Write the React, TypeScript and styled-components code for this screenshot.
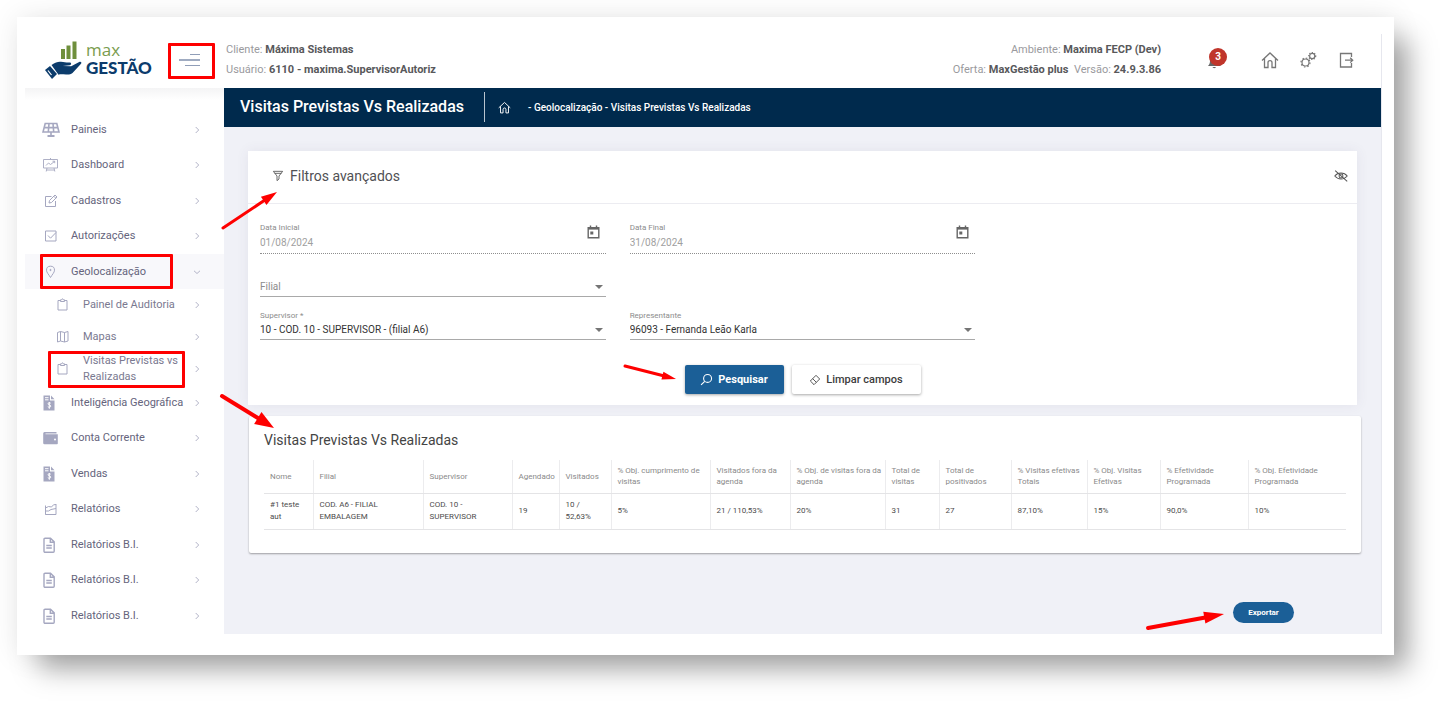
import React from 'react';
import styled, { createGlobalStyle, css } from 'styled-components';

const Global = createGlobalStyle`
  *, *::before, *::after { box-sizing: border-box; }
  body { margin: 0; background: #fff; font-family: Roboto, sans-serif; font-size: 11px; color: #575962; }
  ul { list-style: none; margin: 0; padding: 0; }
  button, input, select { font-family: inherit; }
  svg { display: block; flex: none; }
`;

const RED = '#fe0000';

/* ---------- frame ---------- */

const Page = styled.div`
  padding: 17px 48px 48px 17px;
  overflow: hidden;
`;

const Frame = styled.div`
  background: #fff;
  padding: 17px 12px 21px 8px;
  box-shadow: 18px 18px 26px -4px rgba(0, 0, 0, 0.34), 0 0 28px rgba(0, 0, 0, 0.09);
`;

const Shell = styled.div`
  border-right: 1px solid #e6e7ee;
`;

const Body = styled.div`
  display: grid;
  grid-template-columns: 199px minmax(0, 1fr);
`;

/* ---------- annotations ---------- */

const Highlight = styled.span<{ $inset: string }>`
  position: absolute;
  inset: ${p => p.$inset};
  border: 3px solid ${RED};
  border-radius: 1px;
  pointer-events: none;
`;

const ArrowSvg = styled.svg<{ $left: string; $top: string }>`
  position: absolute;
  left: ${p => p.$left};
  top: ${p => p.$top};
  overflow: visible;
  pointer-events: none;
  z-index: 2;
`;

type ArrowProps = {
  from: [number, number];
  to: [number, number];
  head: number;
  spread: number;
  weight: number;
  $left: string;
  $top: string;
};

function Arrow({ from, to, head, spread, weight, ...place }: ArrowProps) {
  const dx = to[0] - from[0];
  const dy = to[1] - from[1];
  const len = Math.hypot(dx, dy);
  const ux = dx / len;
  const uy = dy / len;
  const bx = to[0] - ux * head;
  const by = to[1] - uy * head;
  return (
    <ArrowSvg width={Math.max(from[0], to[0])} height={Math.max(from[1], to[1])} aria-hidden="true" {...place}>
      <line x1={from[0]} y1={from[1]} x2={bx + ux} y2={by + uy} stroke={RED} strokeWidth={weight} strokeLinecap="round" />
      <polygon
        fill={RED}
        points={`${to[0]},${to[1]} ${bx - uy * spread},${by + ux * spread} ${bx + uy * spread},${by - ux * spread}`}
      />
    </ArrowSvg>
  );
}

/* ---------- icons ---------- */

const Line = styled.svg.attrs({ viewBox: '0 0 18 18', 'aria-hidden': true })<{ $size?: number; $weight?: number }>`
  width: ${p => p.$size ?? 18}px;
  height: ${p => p.$size ?? 18}px;
  fill: none;
  stroke: currentColor;
  stroke-width: ${p => p.$weight ?? 1};
`;

const icons = {
  solar: (
    <Line $weight={1.6}>
      <path d="M3.2 2.500h11.600l2.200 8.500h-16zM2 6.600h14M7 2.500L6.300 11M11 2.500l.7 8.500M9 11v3.500" />
      <path d="M5.500 15h7" strokeWidth="2" />
    </Line>
  ),
  board: (
    <Line $weight={0.9}>
      <path d="M1.500 3.500h14v8.500h-14zM8.500 2v1.500M5 12l-.8 3.500M12 12l.8 3.500M4.500 14h8" />
      <path d="M4 9.500l2.500-2.500 2 1.500L12.500 5.500M10.500 5.200h2.200v2" />
    </Line>
  ),
  pencil: (
    <Line>
      <path d="M9.500 4.500h-6v10h10V9" />
      <path d="M7 11l.5-2.500L13 3l2 2-5.500 5.500zM11.800 4.200l2 2" />
    </Line>
  ),
  check: (
    <Line>
      <path d="M3.500 4h10.500v10H3.500zM6 8.500l2.500 2.700L14 5.500" />
    </Line>
  ),
  pin: (
    <Line>
      <path d="M8.500 14.500C6.800 11.500 4.500 9.500 4.500 7.200a4 4 0 0 1 8 0c0 2.300-2.300 4.300-4 7.300z" />
      <circle cx="8.500" cy="7" r=".6" fill="currentColor" />
    </Line>
  ),
  clip: (
    <Line>
      <path d="M6.500 4.500h-2.500v9.500h9v-9.500h-2.500M6.500 5.500V3.800h1.200c0-1.300 1.600-1.300 1.600 0h1.200v1.700z" />
    </Line>
  ),
  map: (
    <Line>
      <path d="M3.500 4.500l3-1 4 1 3.500-1v9.500l-3.500 1-4-1-3 1zM6.500 3.500v9.500M10.500 4.500v9.500" />
    </Line>
  ),
  money: (
    <Line>
      <path d="M1.500 1.500h6.500v5h4.500v10h-11zM9 1.500l3.500 3.700H9z" fill="currentColor" stroke="none" />
      <path d="M3 3.700h3.500M3 5.800h3.500" stroke="#fff" />
      <path d="M8.700 9.200c-1-.8-3-.4-2.700.8.200 1.200 2.700.7 2.800 2 .1 1.300-2 1.600-3 .7M7.300 8v6.800" stroke="#fff" />
    </Line>
  ),
  wallet: (
    <Line>
      <path d="M3 3h11.500v1.500H3.500v.8h12.300v9.200a.8.800 0 0 1-.8.800H2.500a1.300 1.300 0 0 1-1.300-1.300V4.500A1.500 1.500 0 0 1 3 3z" fill="currentColor" stroke="none" />
      <circle cx="13" cy="10.500" r="1" fill="#fff" stroke="none" />
    </Line>
  ),
  area: (
    <Line>
      <path d="M3.500 5.500v9h10.500V4M3.500 8l3-1.500 3 .5 2-2.200 2.500-.3M3.500 11h3l2.500-1.500 5-1M3.500 14.500H14" />
    </Line>
  ),
  doc: (
    <Line $weight={1.4}>
      <path d="M3 2.200h5.500l3.700 3.700v9.300a1 1 0 0 1-1 1H3a1 1 0 0 1-1-1v-12a1 1 0 0 1 1-1zM8.300 2.500v3.700h3.700M4.300 9.500h5.500M4.300 12h5.500" />
    </Line>
  ),
};

const Chevron = ({ down }: { down?: boolean }) => (
  <svg width="8" height="8" viewBox="0 0 8 8" fill="none" stroke="#b3b4c8" strokeWidth="1" aria-hidden="true">
    <path d={down ? 'M1 2.800l3 2.700 3-2.700' : 'M2.700 1l3 3-3 3'} />
  </svg>
);

const House = ({ size }: { size: number }) => (
  <Line $size={size} $weight={1.3}>
    <path d="M1 9.500L9 2l8 7.500M3.500 7.500v9H7v-5c0-2.500 4-2.500 4 0v5h3.500v-9" />
  </Line>
);

/* ---------- header ---------- */

const Header = styled.header`
  display: flex;
  align-items: center;
  height: 54px;
  padding-left: 20px;
`;

const Brand = styled.a`
  display: flex;
  width: 110px;
  height: 44px;
  color: #0c3c6c;
  text-decoration: none;
`;

const BrandText = styled.span`
  display: flex;
  flex-direction: column;
  justify-content: center;
  margin-left: 3px;
  padding-bottom: 4px;
  line-height: 18px;
  font-family: Lato, sans-serif;
  font-size: 17px;
  font-weight: 900;
`;

const BrandTop = styled.span`
  font-family: 'Open Sans', sans-serif;
  font-weight: 400;
  color: #7a9c4e;
`;

const MenuButton = styled.button`
  position: relative;
  display: grid;
  place-items: center;
  width: 47px;
  height: 36px;
  margin-left: 13px;
  padding: 0 4px 2px 0;
  border: 0;
  background: none;
  color: #6b7da0;
`;

const Meta = styled.div<{ $end?: boolean }>`
  color: #9a9a9e;
  line-height: 20px;
  margin: 0 0 2px 11px;
  white-space: pre;
  ${p => p.$end && css`
    margin-left: auto;
    text-align: right;
  `}
  strong { color: #58585b; font-weight: 700; }
`;

const HeaderActions = styled.nav`
  display: flex;
  align-items: center;
  gap: 20px;
  margin-left: 44px;
  padding: 0 26px 2px 0;
  color: #777;
`;

const IconButton = styled.button`
  position: relative;
  display: grid;
  place-items: center;
  padding: 0;
  border: 0;
  background: none;
  color: inherit;
`;

const BellButton = styled(IconButton)`
  width: 24px;
  height: 24px;
  margin-right: 12px;
`;

const Count = styled.span`
  position: absolute;
  left: 4px;
  top: 0;
  width: 18px;
  border-radius: 9px;
  background: #c0352b;
  color: #fff;
  font-size: 10px;
  font-weight: 700;
  line-height: 18px;
`;

/* ---------- sidebar ---------- */

const Sidebar = styled.nav`
  display: flex;
  flex-direction: column;
  padding-top: 24px;
  background: linear-gradient(#f4f4f5, #fff 12px);
`;

const MenuList = styled.ul`
  display: flex;
  flex-direction: column;
  flex: 1;
`;

const MenuEntry = styled.li`
  display: flex;
  flex: 1 0 35px;
`;

const SubEntry = styled.li`
  display: flex;
  flex: 0 0 32px;
`;

const MenuLink = styled.a<{ $active?: boolean; $sub?: boolean }>`
  position: relative;
  display: grid;
  grid-template-columns: 29px minmax(0, 1fr) 8px;
  align-items: center;
  width: 100%;
  padding: 0 23px 0 ${p => (p.$sub ? 29 : 17)}px;
  background: ${p => (p.$active ? '#f8f8fb' : 'none')};
  color: ${p => (p.$sub ? '#7a7990' : '#65647c')};
  font-size: 11px;
  line-height: 16px;
  text-decoration: none;
  > svg:first-child { color: #a5a7c0; }
  > span:nth-child(2) { padding-right: 9px; }
`;

type Item = { label: string; icon: keyof typeof icons; open?: boolean };

const itemsTop: Item[] = [
  { label: 'Paineis', icon: 'solar' },
  { label: 'Dashboard', icon: 'board' },
  { label: 'Cadastros', icon: 'pencil' },
  { label: 'Autorizações', icon: 'check' },
  { label: 'Geolocalização', icon: 'pin', open: true },
];

const itemsSub: Item[] = [
  { label: 'Painel de Auditoria', icon: 'clip' },
  { label: 'Mapas', icon: 'map' },
  { label: 'Visitas Previstas vs Realizadas', icon: 'clip', open: true },
];

const itemsBottom: Item[] = [
  { label: 'Inteligência Geográfica', icon: 'money' },
  { label: 'Conta Corrente', icon: 'wallet' },
  { label: 'Vendas', icon: 'money' },
  { label: 'Relatórios', icon: 'area' },
  { label: 'Relatórios B.I.', icon: 'doc' },
  { label: 'Relatórios B.I.', icon: 'doc' },
  { label: 'Relatórios B.I.', icon: 'doc' },
];

const MainItem = ({ item }: { item: Item }) => (
  <MenuEntry>
    <MenuLink href="#" $active={item.open}>
      {icons[item.icon]}
      <span>{item.label}</span>
      <Chevron down={item.open} />
      {item.open && <Highlight $inset="0 51px 0 15px" />}
    </MenuLink>
  </MenuEntry>
);

/* ---------- content ---------- */

const Main = styled.main`
  background: #f0f1f7;
`;

const TitleBar = styled.div`
  display: flex;
  align-items: center;
  height: 39px;
  padding: 0 0 1px 16px;
  background: #002a4d;
  color: #fff;
`;

const PageTitle = styled.h1`
  margin: 0;
  padding-right: 20px;
  border-right: 1px solid #b8c4cf;
  font-size: 16px;
  font-weight: 500;
  line-height: 30px;
`;

const Crumbs = styled.div`
  display: flex;
  align-items: center;
  gap: 17px;
  padding-left: 13px;
  font-size: 10px;
  font-weight: 500;
`;

const Content = styled.div`
  padding: 24px 0 11px;
`;

const FilterCard = styled.section`
  position: relative;
  margin: 0 24px;
  padding-bottom: 11px;
  background: #fff;
  box-shadow: 0 0 12px rgba(82, 63, 105, 0.08);
`;

const FilterHead = styled.div`
  display: flex;
  align-items: center;
  height: 53px;
  padding: 0 9px 2px 24px;
  border-bottom: 1px solid #ececf1;
  color: #555;
`;

const FilterTitle = styled.h2`
  flex: 1;
  margin: 0 0 0 6px;
  font-size: 14px;
  font-weight: 400;
  color: #505054;
`;

const Fields = styled.form`
  display: grid;
  grid-template-columns: repeat(3, minmax(0, 1fr));
  column-gap: 24px;
  padding: 17px 12px 0;
`;

const FieldBox = styled.div<{ $first?: boolean; $dotted?: boolean }>`
  position: relative;
  grid-column-start: ${p => (p.$first ? 1 : 'auto')};
  display: flex;
  flex-direction: column;
  justify-content: flex-end;
  gap: ${p => (p.$dotted ? 1 : 0)}px;
  height: ${p => (p.$dotted ? 33 : 43)}px;
  padding-bottom: ${p => (p.$dotted ? 2 : 1)}px;
  border-bottom: ${p => (p.$dotted ? '1px dotted #8e8e8e' : '1px solid #a9a9a9')};
`;

const FieldLabel = styled.label`
  font-size: 8px;
  line-height: 12px;
  color: #8c8c8c;
`;

const textLook = css`
  width: 100%;
  height: 16px;
  padding: 0;
  border: 0;
  background: none;
  font-size: 10px;
  line-height: 16px;
`;

const DateInput = styled.input`
  ${textLook}
  color: #a0a0a0;
`;

const Picker = styled.select<{ $empty?: boolean }>`
  ${textLook}
  appearance: none;
  color: ${p => (p.$empty ? '#8c8c8c' : '#333')};
`;

const Caret = styled.span`
  position: absolute;
  right: 3px;
  bottom: 7px;
  border: 4px solid transparent;
  border-bottom: 0;
  border-top-color: #757575;
  pointer-events: none;
`;

const CalendarButton = styled(IconButton)`
  position: absolute;
  right: 6px;
  bottom: 14px;
  color: #666;
`;

const Actions = styled.div`
  position: relative;
  display: flex;
  justify-content: center;
  gap: 8px;
  width: fit-content;
  margin: 25px auto 0;
`;

const Action = styled.button<{ $primary?: boolean }>`
  display: flex;
  align-items: center;
  justify-content: center;
  gap: 5px;
  width: ${p => (p.$primary ? 99 : 129)}px;
  height: 29px;
  padding: 0;
  border: 0;
  border-radius: 2px;
  background: ${p => (p.$primary ? '#1b5f97' : '#fff')};
  color: ${p => (p.$primary ? '#fff' : '#3c3c3c')};
  box-shadow: 0 1px 3px rgba(0, 0, 0, 0.35);
  font-size: 11px;
  font-weight: ${p => (p.$primary ? 700 : 500)};
`;

const ResultCard = styled.section`
  position: relative;
  margin: 11px 20px 0 25px;
  padding: 14px 15px 23px;
  border-radius: 2px;
  background: #fff;
  box-shadow: 0 1px 2px rgba(0, 0, 0, 0.35);
`;

const ResultTitle = styled.h2`
  margin: 0 0 10px;
  font-size: 14px;
  font-weight: 400;
  line-height: 20px;
  color: #444;
`;

const Table = styled.table`
  width: 100%;
  table-layout: fixed;
  border-collapse: collapse;
  font-size: 8px;
  th, td {
    padding: 0 0 0 6px;
    border-bottom: 1px solid #e4e4e6;
    text-align: left;
  }
  th + th, td + td { border-left: 1px solid #ececee; }
  th {
    height: 33px;
    line-height: 11px;
    font-weight: 400;
    color: #8a8a8a;
  }
  td {
    height: 36px;
    line-height: 12px;
    color: #4c4c4c;
  }
`;

const columns: { head: string; value: string; width?: number }[] = [
  { head: 'Nome', value: '#1 teste\naut', width: 49 },
  { head: 'Filial', value: 'COD. A6 - FILIAL\nEMBALAGEM', width: 110 },
  { head: 'Supervisor', value: 'COD. 10 -\nSUPERVISOR', width: 89 },
  { head: 'Agendado', value: '19', width: 47 },
  { head: 'Visitados', value: '10 /\n52,63%', width: 52 },
  { head: '% Obj. cumprimento de\nvisitas', value: '5%', width: 99 },
  { head: 'Visitados fora da\nagenda', value: '21 / 110,53%', width: 80 },
  { head: '% Obj. de visitas fora da\nagenda', value: '20%', width: 95 },
  { head: 'Total de\nvisitas', value: '31', width: 54 },
  { head: 'Total de\npositivados', value: '27', width: 72 },
  { head: '% Visitas efetivas\nTotais', value: '87,10%', width: 76 },
  { head: '% Obj. Visitas\nEfetivas', value: '15%', width: 73 },
  { head: '% Efetividade\nProgramada', value: '90,0%', width: 88 },
  { head: '% Obj. Efetividade\nProgramada', value: '10%' },
];

const Cell = styled.span`
  display: block;
  white-space: pre;
`;

const Footer = styled.div`
  position: relative;
  display: flex;
  justify-content: flex-end;
  width: fit-content;
  margin: 49px 87px 0 auto;
`;

const ExportButton = styled.button`
  width: 61px;
  height: 21px;
  padding: 0;
  border: 0;
  border-radius: 11px;
  background: #1b5f97;
  color: #fff;
  font-size: 8px;
  font-weight: 700;
`;

const Calendar = () => (
  <svg width="13" height="14" viewBox="0 0 13 14" fill="none" stroke="currentColor" strokeWidth="1.400" aria-hidden="true">
    <path d="M1.200 2.700h10.600v10H1.200zM3.500 .5v2M9.500 .5v2" />
    <path d="M1.200 3.500h10.600" strokeWidth="2.200" />
    <path d="M3.300 6.500h3v3h-3z" fill="currentColor" stroke="none" />
  </svg>
);

export default function App() {
  return (
    <Page>
      <Global />
      <Frame>
        <Shell>
          <Header>
            <Brand href="#" aria-label="max GESTÃO">
              <svg width="38" height="44" viewBox="0 0 38 44" aria-hidden="true">
                <path d="M16 10h4v10h-4zM21.500 6.500h4V20h-4zM27.500 2.500h4V20h-4z" fill="#6f8f3c" />
                <path d="M0 31l5-4 7 8-5 5z" fill="#0c3c6c" />
                <path d="M3 31.500l3.500 4.500" stroke="#fff" strokeWidth="1.200" />
                <path d="M6.500 26c4-3 7-3.500 9.500-3.200 3.500.4 5 .8 8.500.7 2 0 2.300 2.300.2 2.700l-7 .8 8.500.3 8-4.200c1.800-.8 3 .6 1.600 2L27.500 34c-2 1.600-4 1.700-6.500 1.500-3.500-.3-5.500-.7-7.500.2z" fill="#0c3c6c" />
              </svg>
              <BrandText>
                <BrandTop>max</BrandTop>
                <span>GESTÃO</span>
              </BrandText>
            </Brand>
            <MenuButton type="button" aria-label="Abrir menu">
              <svg width="22" height="14" viewBox="0 0 22 14" fill="none" stroke="currentColor" aria-hidden="true">
                <path d="M11 1.500h10M6 12.500h15" opacity=".75" />
                <path d="M0 7h21" strokeWidth="1.300" />
              </svg>
              <Highlight $inset="0" />
            </MenuButton>
            <Meta>
              <div>Cliente: <strong>Máxima Sistemas</strong></div>
              <div>Usuário: <strong>6110 - maxima.SupervisorAutoriz</strong></div>
            </Meta>
            <Meta $end>
              <div>Ambiente: <strong>Maxima FECP (Dev)</strong></div>
              <div>Oferta: <strong>MaxGestão plus</strong>{'  '}Versão: <strong>24.9.3.86</strong></div>
            </Meta>
            <HeaderActions aria-label="Ações">
              <BellButton type="button" aria-label="Notificações">
                <svg width="18" height="18" viewBox="0 0 18 18" fill="#666" aria-hidden="true">
                  <path d="M0 15c2-2 2-4 2-6a4.500 4.500 0 0 1 9 0c0 2 0 4 2 6zM4.500 16H8c-.5 1.500-3 1.500-3.500 0z" />
                </svg>
                <Count>3</Count>
              </BellButton>
              <IconButton type="button" aria-label="Início"><House size={18} /></IconButton>
              <IconButton type="button" aria-label="Configurações">
                <Line $weight={1.2}>
                  <circle cx="6.500" cy="11.500" r="3.500" />
                  <circle cx="6.500" cy="11.500" r="4.500" strokeDasharray="1.500 2" />
                  <circle cx="13.200" cy="5" r="2.600" />
                  <circle cx="13.200" cy="5" r="3.500" strokeDasharray="1.200 1.400" />
                </Line>
              </IconButton>
              <IconButton type="button" aria-label="Sair">
                <Line $weight={1.3}>
                  <path d="M14.500 6V2.500h-11v13.500h11V12M8 9.200h7.500M13.200 6.800l2.500 2.400-2.500 2.400" />
                </Line>
              </IconButton>
            </HeaderActions>
          </Header>

          <Body>
            <Sidebar aria-label="Menu principal">
              <MenuList>
                {itemsTop.map(item => <MainItem key={item.label} item={item} />)}
                {itemsSub.map(item => (
                  <SubEntry key={item.label}>
                    <MenuLink href="#" $sub>
                      {icons[item.icon]}
                      <span>{item.label}</span>
                      <Chevron />
                      {item.open && <Highlight $inset="-2px 39px -3px 23px" />}
                    </MenuLink>
                  </SubEntry>
                ))}
                {itemsBottom.map((item, i) => <MainItem key={i} item={item} />)}
              </MenuList>
            </Sidebar>

            <Main>
              <TitleBar>
                <PageTitle>Visitas Previstas Vs Realizadas</PageTitle>
                <Crumbs>
                  <House size={13} />
                  <span>- Geolocalização - Visitas Previstas Vs Realizadas</span>
                </Crumbs>
              </TitleBar>

              <Content>
                <FilterCard>
                  <Arrow $left="-26px" $top="40px" from={[1, 37]} to={[55, 1]} head={16} spread={5} weight={3} />
                  <FilterHead>
                    <Line $size={12} $weight={1.3}>
                      <path d="M2 2h14l-5.500 7v4.500L7.500 16V9zM4 5h10" />
                    </Line>
                    <FilterTitle>Filtros avançados</FilterTitle>
                    <IconButton type="button" aria-label="Ocultar filtros">
                      <Line $size={14} $weight={1.3}>
                        <path d="M1 9C5 4 13 4 17 9 13 14 5 14 1 9zM1.500 2L17 16" />
                        <circle cx="9" cy="9" r="2.500" />
                      </Line>
                    </IconButton>
                  </FilterHead>

                  <Fields>
                    <FieldBox $first $dotted>
                      <FieldLabel htmlFor="data-inicial">Data Inicial</FieldLabel>
                      <DateInput id="data-inicial" defaultValue="01/08/2024" disabled />
                      <CalendarButton type="button" aria-label="Escolher data inicial"><Calendar /></CalendarButton>
                    </FieldBox>
                    <FieldBox $dotted>
                      <FieldLabel htmlFor="data-final">Data Final</FieldLabel>
                      <DateInput id="data-final" defaultValue="31/08/2024" disabled />
                      <CalendarButton type="button" aria-label="Escolher data final"><Calendar /></CalendarButton>
                    </FieldBox>
                    <FieldBox $first>
                      <Picker aria-label="Filial" $empty defaultValue="">
                        <option value="">Filial</option>
                      </Picker>
                      <Caret />
                    </FieldBox>
                    <FieldBox $first>
                      <FieldLabel htmlFor="supervisor">Supervisor *</FieldLabel>
                      <Picker id="supervisor">
                        <option>10 - COD. 10 - SUPERVISOR - (filial A6)</option>
                      </Picker>
                      <Caret />
                    </FieldBox>
                    <FieldBox>
                      <FieldLabel htmlFor="representante">Representante</FieldLabel>
                      <Picker id="representante">
                        <option>96093 - Fernanda Leão Karla</option>
                      </Picker>
                      <Caret />
                    </FieldBox>
                  </Fields>

                  <Actions>
                    <Arrow $left="-62px" $top="-1px" from={[2, 2]} to={[53, 15]} head={14} spread={4} weight={3} />
                    <Action type="button" $primary>
                      <Line $size={13} $weight={1.5}>
                        <circle cx="10.500" cy="7.500" r="5.500" />
                        <path d="M6.500 11.500L1.500 16.500" />
                      </Line>
                      Pesquisar
                    </Action>
                    <Action type="button">
                      <Line $size={12} $weight={1.3}>
                        <path d="M2 10.500L10.500 2 16 7.500 7.500 16zM5.500 7l5.500 5.500" />
                      </Line>
                      Limpar campos
                    </Action>
                  </Actions>
                </FilterCard>

                <ResultCard>
                  <Arrow $left="-29px" $top="-22px" from={[2, 2]} to={[54, 34]} head={19} spread={7} weight={4} />
                  <ResultTitle>Visitas Previstas Vs Realizadas</ResultTitle>
                  <Table>
                    <colgroup>
                      {columns.map(c => <col key={c.head} width={c.width} />)}
                    </colgroup>
                    <thead>
                      <tr>{columns.map(c => <th key={c.head} scope="col"><Cell>{c.head}</Cell></th>)}</tr>
                    </thead>
                    <tbody>
                      <tr>{columns.map(c => <td key={c.head}><Cell>{c.value}</Cell></td>)}</tr>
                    </tbody>
                  </Table>
                </ResultCard>

                <Footer>
                  <Arrow $left="-87px" $top="9px" from={[2, 17]} to={[78, 3]} head={20} spread={6} weight={4} />
                  <ExportButton type="button">Exportar</ExportButton>
                </Footer>
              </Content>
            </Main>
          </Body>
        </Shell>
      </Frame>
    </Page>
  );
}
